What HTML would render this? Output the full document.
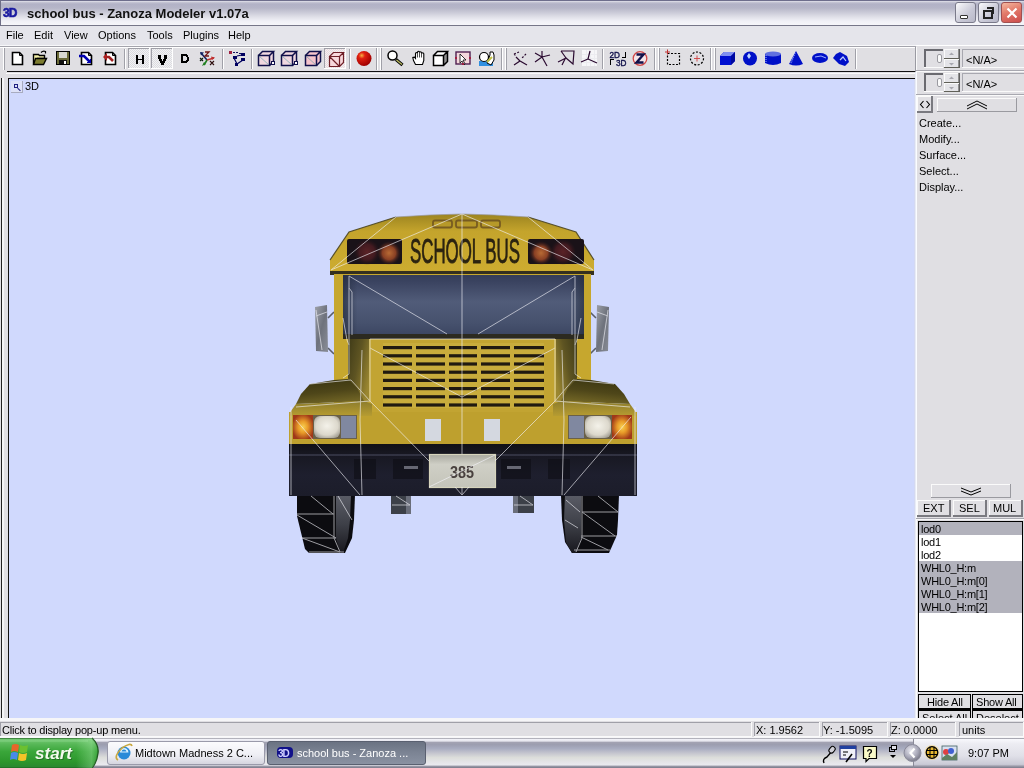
<!DOCTYPE html>
<html><head><meta charset="utf-8">
<style>
*{margin:0;padding:0;box-sizing:border-box}
html,body{width:1024px;height:768px;overflow:hidden;background:#e0dfe3;font-family:"Liberation Sans",sans-serif;font-size:11px;color:#000;position:relative}
.a{position:absolute}
.t{position:absolute;white-space:nowrap;line-height:1}
#title{left:0;top:0;width:1024px;height:26px;border-left:1px solid #6e6e86;background:linear-gradient(#6e6e8c 0px,#6e6e8c 1px,#e8e8f0 1px,#c8c8d6 2px,#b2b2c6 4px,#b6b6c8 8px,#c8c8d6 12px,#e0e0e8 17px,#f0f0f6 21px,#f6f6fa 25px,#767688 25px,#767688 26px)}
#ttext{left:27px;top:7px;font-weight:bold;font-size:13px;color:#111;letter-spacing:0}
.wbtn{position:absolute;top:2px;width:21px;height:21px;border-radius:3px;border:1px solid #7a7a8a;background:linear-gradient(135deg,#fafafc,#c8c8d6 60%,#b8b8c8)}
#menu{left:0;top:26px;width:1024px;height:19px;background:#e5e5eb}
.mi{top:30px;font-size:11px}
#tb{left:0;top:45px;width:1024px;height:27px;background:#e0dfe3;border-top:1px solid #fff}
#vp{left:9px;top:79px;width:906px;height:639px;background:#d0d9fd}
#rp{left:916px;top:46px;width:108px;height:672px;background:#e0dfe3}
#status{left:0;top:718px;width:1024px;height:20px;background:#e0dfe3;border-top:1px solid #fff}
#taskbar{left:0;top:738px;width:1024px;height:30px;background:linear-gradient(#a8a8b8 0px,#f4f4f8 1px,#d0d0dc 3px,#a8a9bc 7px,#b4b5c6 11px,#d4d5de 18px,#e6e6ec 24px,#dcdce4 28px,#9090a0 30px)}
.sp{position:absolute;border-top:1px solid #a0a0a8;border-left:1px solid #a0a0a8;border-right:1px solid #fff;border-bottom:1px solid #fff}
.btn{position:absolute;background:#e0dfe3;border-top:1px solid #fff;border-left:1px solid #fff;border-right:1px solid #808080;border-bottom:1px solid #808080;box-shadow:1px 1px 0 #404040}
</style></head><body>
<div id="root" style="position:absolute;left:0;top:0;width:1024px;height:768px;overflow:hidden;will-change:transform;background:#e0dfe3">
<!-- title bar -->
<div id="title" class="a"></div>
<svg class="a" style="left:3px;top:6px" width="20" height="13" viewBox="0 0 20 13"><text x="0" y="11" font-family="Liberation Sans" font-weight="bold" font-size="12" fill="#1a1aa0" stroke="#1a1aa0" stroke-width="0.6" letter-spacing="-1">3D</text></svg>
<div id="ttext" class="t">school bus - Zanoza Modeler v1.07a</div>
<div class="wbtn" style="left:955px"><div class="a" style="left:4px;top:12px;width:8px;height:4px;background:#fff;border:1px solid #333;border-radius:1px"></div></div>
<div class="wbtn" style="left:978px"><svg class="a" style="left:0;top:0" width="19" height="19" shape-rendering="crispEdges"><path d="M8 4h7v7h-2v-5h-5z" fill="#222"/><rect x="5" y="8" width="8" height="7" fill="none" stroke="#222" stroke-width="2"/><rect x="4" y="7" width="10" height="2" fill="#222"/></svg></div>
<div class="wbtn" style="left:1001px;border-color:#a05050;background:linear-gradient(160deg,#f4b8a0,#e27a6a 45%,#cc4c4c)"><svg class="a" style="left:3px;top:3px" width="14" height="14"><path d="M2.5 2.5L11.5 11.5M11.5 2.5L2.5 11.5" stroke="#fff" stroke-width="2.2"/></svg></div>
<!-- menu -->
<div id="menu" class="a"></div>
<div class="t mi" style="left:6px">File</div>
<div class="t mi" style="left:34px">Edit</div>
<div class="t mi" style="left:64px">View</div>
<div class="t mi" style="left:98px">Options</div>
<div class="t mi" style="left:147px">Tools</div>
<div class="t mi" style="left:183px">Plugins</div>
<div class="t mi" style="left:228px">Help</div>
<!-- toolbar -->
<div id="tb" class="a"></div>
<div class="a" style="left:0;top:71px;width:1024px;height:8px;background:#e0dfe3"></div>
<div class="a" style="left:7px;top:71px;width:908px;height:1px;background:#111"></div>
<div class="a" style="left:6px;top:73px;width:909px;height:1px;background:#fafafa"></div>
<div class="a" style="left:8px;top:78px;width:907px;height:1px;background:#111"></div>
<div class="a" style="left:1px;top:78px;width:1px;height:640px;background:#222"></div>
<div class="a" style="left:2px;top:78px;width:2px;height:640px;background:#f4f4f6"></div>
<div class="a" style="left:8px;top:78px;width:1px;height:640px;background:#111"></div>
<!-- viewport -->
<div id="vp" class="a"></div>
<div class="a" style="left:11px;top:81px;width:12px;height:12px;background:#dde2f8;border-right:1px solid #a8acc0;border-bottom:1px solid #a8acc0"></div>
<div class="a" style="left:14px;top:84px;width:4px;height:4px;border:1px solid #202080"></div>
<div class="a" style="left:17px;top:89px;width:4px;height:1px;background:#202080;transform:rotate(45deg)"></div>
<div class="t" style="left:25px;top:81px;font-size:11px">3D</div>
<!-- toolbar icons -->
<svg class="a" style="left:0;top:44px" width="916" height="30" viewBox="0 44 916 30" shape-rendering="crispEdges">
<rect x="0" y="45" width="916" height="1" fill="#f8f8fa"/>
<rect x="0" y="46" width="916" height="1" fill="#a4a4ac"/>
<rect x="0" y="47" width="916" height="1" fill="#ffffff"/>
<rect x="3" y="48" width="1" height="22" fill="#ffffff"/><rect x="4" y="48" width="1" height="22" fill="#a0a0a8"/>
<path d="M12.5 52.5H19.5L22.5 55.5V64.5H12.5Z" fill="#fff" stroke="#000" stroke-width="1.6" shape-rendering="auto"/>
<path d="M19.5 52.5V55.5H22.5" fill="none" stroke="#000" stroke-width="1" shape-rendering="auto"/>
<path d="M33.5 54.5H38.5L39.5 55.5H44.5V58.5H37.5L34.5 63.5H33.5Z" fill="#f4f0a8" stroke="#000" stroke-width="1.4" shape-rendering="auto"/>
<path d="M35.5 58.5H46.5L43.5 64.5H33.5Z" fill="#7c7c30" stroke="#000" stroke-width="1.4" shape-rendering="auto"/>
<path d="M41 52.5Q43 50.5 45.5 51.5V53.5" fill="none" stroke="#000" stroke-width="1.2" shape-rendering="auto"/>
<rect x="56" y="51" width="14" height="14" fill="#000"/>
<rect x="57" y="52" width="12" height="12" fill="#6a6a38"/>
<rect x="59" y="52" width="8" height="6" fill="#d8d8d0"/>
<rect x="59" y="60" width="8" height="4" fill="#111"/><rect x="64" y="61" width="2" height="3" fill="#fff"/>
<path d="M81.5 52.5H88.5L91.5 55.5V64.5H81.5Z" fill="#fff" stroke="#000" stroke-width="1.6" shape-rendering="auto"/>
<path d="M88.5 52.5V55.5H91.5" fill="none" stroke="#000" stroke-width="1" shape-rendering="auto"/>
<path d="M79 56H84L90 62" fill="none" stroke="#0000b0" stroke-width="2.6" shape-rendering="auto"/>
<path d="M86 63H91V58Z" fill="#0000b0"/>
<path d="M105.5 52.5H112.5L115.5 55.5V64.5H105.5Z" fill="#fff" stroke="#000" stroke-width="1.6" shape-rendering="auto"/>
<path d="M112.5 52.5V55.5H115.5" fill="none" stroke="#000" stroke-width="1" shape-rendering="auto"/>
<path d="M103 57L107 53V61Z" fill="#b02020" shape-rendering="auto"/>
<path d="M106 57H109L113 61" fill="none" stroke="#a02020" stroke-width="2.6" shape-rendering="auto"/>
<rect x="124" y="49" width="1" height="20" fill="#a0a0a8"/><rect x="125" y="49" width="1" height="20" fill="#ffffff"/>
<defs><pattern id="dith" width="2" height="2" patternUnits="userSpaceOnUse"><rect width="2" height="2" fill="#f2f2f4"/><rect width="1" height="1" fill="#dcdce0"/><rect x="1" y="1" width="1" height="1" fill="#dcdce0"/></pattern><pattern id="dithp" width="2" height="2" patternUnits="userSpaceOnUse"><rect width="2" height="2" fill="#f6eef0"/><rect width="1" height="1" fill="#e6dce0"/><rect x="1" y="1" width="1" height="1" fill="#e6dce0"/></pattern></defs>
<rect x="128" y="48" width="22" height="21" fill="url(#dith)"/>
<rect x="128" y="48" width="22" height="1" fill="#a0a0a8"/><rect x="128" y="48" width="1" height="21" fill="#a0a0a8"/>
<rect x="128" y="68" width="22" height="1" fill="#fff"/><rect x="149" y="48" width="1" height="21" fill="#fff"/>
<rect x="151" y="48" width="22" height="21" fill="url(#dith)"/>
<rect x="151" y="48" width="22" height="1" fill="#a0a0a8"/><rect x="151" y="48" width="1" height="21" fill="#a0a0a8"/>
<rect x="151" y="68" width="22" height="1" fill="#fff"/><rect x="172" y="48" width="1" height="21" fill="#fff"/>
<path d="M136 55h2v4h4v-4h2v9h-2v-4h-4v4h-2z" fill="#000"/>
<path d="M158 55h3v4h1v2h1v-2h1v-4h3v4h-1v2h-1v2h-1v2h-3v-2h-1v-2h-1v-2h-1z" fill="#000"/>
<path d="M181 54h5l1 1h1v2h1v4h-1v1h-1l-1 1h-5z M183 56v5h3v-1h1v-3h-1v-1z" fill="#000" fill-rule="evenodd"/>
<g shape-rendering="auto">
<path d="M207 60L201 53" stroke="#102060" stroke-width="1.6"/><path d="M200 52L204 52.5L201 55.5Z" fill="#102060"/>
<path d="M205 52h4l-4 4h4" fill="none" stroke="#701818" stroke-width="1.3"/>
<path d="M207 60L214 58" stroke="#c03030" stroke-width="1.4"/><path d="M215 57.5L211 56.5L212 60Z" fill="#c03030"/>
<path d="M207 60L204 65" stroke="#208020" stroke-width="1.6"/><path d="M202 66L204 62L206 64Z" fill="#208020"/>
<path d="M200 58L203 61M203 58L200 61" stroke="#102010" stroke-width="1.2"/>
<path d="M210 61L214 65M214 61L210 65" stroke="#301010" stroke-width="1.1"/>
</g>
<rect x="222" y="49" width="1" height="20" fill="#a0a0a8"/><rect x="223" y="49" width="1" height="20" fill="#ffffff"/>
<rect x="229" y="51" width="3" height="3" fill="#a02040"/>
<path d="M233 52h2v1h-2zM236 52h2v1h-2zM239 53h2v1h-2z" fill="#101060"/>
<rect x="241" y="53" width="4" height="3" fill="#000060"/>
<rect x="233" y="56" width="4" height="3" fill="#000060"/>
<rect x="241" y="58" width="4" height="3" fill="#000060"/>
<rect x="235" y="63" width="3" height="3" fill="#000060"/>
<path d="M237 56L242 55M234 58L237 64M237 64L243 60" stroke="#000060" stroke-width="1.2" shape-rendering="auto"/>
<rect x="251" y="49" width="1" height="20" fill="#a0a0a8"/><rect x="252" y="49" width="1" height="20" fill="#ffffff"/>
<g shape-rendering="auto">
<path d="M258.5 55.5L262.5 51.5H273.5V61.5L269.5 65.5H258.5Z" fill="#f0d8e0" stroke="none"/>
<path d="M258.5 55.5H269.5V65.5H258.5Z" fill="none" stroke="#10104a" stroke-width="1.5"/>
<path d="M258.5 55.5L262.5 51.5H273.5L269.5 55.5M273.5 51.5V61.5L269.5 65.5" fill="none" stroke="#10104a" stroke-width="1.5"/>
<path d="M259 56L269 65" stroke="#50a0a0" stroke-width="0.8" opacity="0.7"/>
</g>
<rect x="271" y="61" width="3" height="3" fill="#fff" stroke="#10104a" stroke-width="1"/>
<g shape-rendering="auto">
<path d="M281.5 55.5L285.5 51.5H296.5V61.5L292.5 65.5H281.5Z" fill="#f0d8e0" stroke="none"/>
<path d="M281.5 55.5H292.5V65.5H281.5Z" fill="none" stroke="#10104a" stroke-width="1.5"/>
<path d="M281.5 55.5L285.5 51.5H296.5L292.5 55.5M296.5 51.5V61.5L292.5 65.5" fill="none" stroke="#10104a" stroke-width="1.5"/>
<path d="M282 56L292 65" stroke="#50a0a0" stroke-width="0.8" opacity="0.7"/>
</g>
<rect x="294" y="61" width="3" height="3" fill="#fff" stroke="#10104a" stroke-width="1"/>
<g shape-rendering="auto">
<path d="M305.5 55.5L309.5 51.5H320.5V61.5L316.5 65.5H305.5Z" fill="#f4c4cc" stroke="none"/>
<path d="M305.5 55.5H316.5V65.5H305.5Z" fill="none" stroke="#10104a" stroke-width="1.5"/>
<path d="M305.5 55.5L309.5 51.5H320.5L316.5 55.5M320.5 51.5V61.5L316.5 65.5" fill="none" stroke="#10104a" stroke-width="1.5"/>
<path d="M306 56L316 65" stroke="#50a0a0" stroke-width="0.8" opacity="0.7"/>
</g>
<rect x="324" y="48" width="22" height="21" fill="url(#dithp)"/>
<rect x="324" y="48" width="22" height="1" fill="#a0a0a8"/><rect x="324" y="48" width="1" height="21" fill="#a0a0a8"/><rect x="324" y="68" width="22" height="1" fill="#fff"/><rect x="345" y="48" width="1" height="21" fill="#fff"/>
<g shape-rendering="auto"><path d="M329.5 56.5L333.5 52.5H343.5V62.5L339.5 66.5H329.5Z" fill="#f8d8dc"/>
<path d="M329.5 56.5H339.5V66.5H329.5ZM329.5 56.5L333.5 52.5H343.5L339.5 56.5M343.5 52.5V62.5L339.5 66.5M329.5 56.5L339.5 66.5" fill="none" stroke="#702028" stroke-width="1.2"/></g>
<rect x="349" y="49" width="1" height="20" fill="#a0a0a8"/><rect x="350" y="49" width="1" height="20" fill="#ffffff"/>
<g shape-rendering="auto"><defs><radialGradient id="rsph" cx="0.35" cy="0.3" r="0.7"><stop offset="0" stop-color="#f8b040"/><stop offset="0.3" stop-color="#e02010"/><stop offset="1" stop-color="#a00000"/></radialGradient></defs><circle cx="364" cy="58.5" r="7.5" fill="url(#rsph)"/></g>
<rect x="376" y="48" width="1" height="22" fill="#a0a0a8"/><rect x="377" y="48" width="1" height="22" fill="#ffffff"/>
<rect x="380" y="48" width="1" height="22" fill="#ffffff"/><rect x="381" y="48" width="1" height="22" fill="#a0a0a8"/>
<g shape-rendering="auto"><circle cx="392.5" cy="55.5" r="4.5" fill="#fff" stroke="#000" stroke-width="1.5"/><path d="M396 59.5L402.5 65" stroke="#000" stroke-width="3.2"/><path d="M396.5 60L402 64.5" stroke="#b8b860" stroke-width="1.5"/></g>
<g shape-rendering="auto"><path d="M415.5 64.5L413.5 60.5L412.8 57.5L414.5 57.2L415.5 58.5V53.5Q415.5 52.5 416.5 52.5Q417.5 52.5 417.5 53.5V52.3Q417.5 51.3 418.5 51.3Q419.5 51.3 419.5 52.3V52.8Q419.5 51.8 420.5 51.8Q421.5 51.8 421.5 52.8V53.8Q421.5 52.8 422.5 52.8Q423.8 52.8 423.8 53.8V60.5L422.5 64.5Z" fill="#fff" stroke="#000" stroke-width="1.1"/><path d="M417.5 53.5V57.5M419.5 52.8V57.5M421.5 53.8V57.5" stroke="#000" stroke-width="0.7"/></g>
<g shape-rendering="auto"><path d="M433.5 55.5L437.5 51.5H447.5V61.5L443.5 65.5H433.5Z" fill="#fff"/><path d="M443.5 55.5L447.5 51.5V61.5L443.5 65.5Z" fill="#909090"/><path d="M433.5 55.5H443.5V65.5H433.5ZM433.5 55.5L437.5 51.5H447.5L443.5 55.5M447.5 51.5V61.5L443.5 65.5" fill="none" stroke="#000" stroke-width="1.5"/></g>
<rect x="456" y="52" width="14" height="12" fill="#f4d8dc" stroke="#502050" stroke-width="1.4" shape-rendering="auto"/>
<path d="M460 54V63L462 61L464 65L465 64L463 60H466Z" fill="#fff" stroke="#000" stroke-width="0.8" shape-rendering="auto"/>
<rect x="455" y="57" width="2" height="2" fill="#a02040"/><rect x="469" y="57" width="2" height="2" fill="#a02040"/><rect x="462" y="63" width="2" height="2" fill="#a02040"/>
<g shape-rendering="auto"><rect x="479" y="61" width="14" height="5" fill="#3090e0"/><circle cx="484" cy="57" r="4.5" fill="#fff" stroke="#000" stroke-width="1.2"/><path d="M487 63L490 55V52H493L494 55V60L491 65Z" fill="#fff" stroke="#000" stroke-width="1"/><path d="M487 62L492 57" stroke="#c0c040" stroke-width="2"/></g>
<rect x="501" y="48" width="1" height="22" fill="#a0a0a8"/><rect x="502" y="48" width="1" height="22" fill="#ffffff"/>
<rect x="505" y="48" width="1" height="22" fill="#ffffff"/><rect x="506" y="48" width="1" height="22" fill="#a0a0a8"/>
<g shape-rendering="auto" fill="none" stroke="#2a0a30" stroke-width="1.2">
<path d="M514 65L520 61L527 65M520 61L516 57"/>
<path d="M514 54L519 52M514 54L516 56M526 54L522 58" stroke-dasharray="2 1.5"/>
<path d="M542 57L535 53M542 57L550 55M542 57L542 51M542 57L535 62M542 57L547 66"/>
<path d="M561 51L574 51L573 64L566 58M561 51L566 58M558 62L566 58M562 65L566 57"/>
</g>
<rect x="582" y="50" width="15" height="16" fill="#f6f6f8"/>
<path d="M582 54h15M582 58h15M582 62h15M586 50v16M590 50v16M594 50v16" stroke="#ececf0" stroke-width="1"/>
<path d="M588 59L590 51M588 59L581 62M588 59L597 63" fill="none" stroke="#2a0a30" stroke-width="1.2" shape-rendering="auto"/>
<rect x="602" y="49" width="1" height="20" fill="#a0a0a8"/><rect x="603" y="49" width="1" height="20" fill="#ffffff"/>
<g shape-rendering="auto" font-family="Liberation Sans" font-size="8.5" fill="#10104a" stroke="#10104a" stroke-width="0.35">
<text x="609.5" y="57.8" textLength="10.5" lengthAdjust="spacingAndGlyphs">2D</text>
<text x="616" y="65.8" textLength="10.5" lengthAdjust="spacingAndGlyphs">3D</text>
</g>
<path d="M622 57h3v-5h1v6h-4z M610 59h4v1h-3v5h-1z" fill="#000"/>
<g shape-rendering="auto"><circle cx="640" cy="58.5" r="6.8" fill="#f4e4e8" stroke="#d04848" stroke-width="1.3"/><path d="M636.5 54.5H643.5L636.5 62.5H643.5" fill="none" stroke="#10104a" stroke-width="2.4"/></g>
<rect x="654" y="48" width="1" height="22" fill="#a0a0a8"/><rect x="655" y="48" width="1" height="22" fill="#ffffff"/>
<rect x="658" y="48" width="1" height="22" fill="#ffffff"/><rect x="659" y="48" width="1" height="22" fill="#a0a0a8"/>
<g shape-rendering="auto"><rect x="667.5" y="53.5" width="12" height="11" fill="none" stroke="#000" stroke-width="1.2" stroke-dasharray="2 1.5"/><path d="M665 52H670M667.5 49.5V54.5" stroke="#c03030" stroke-width="1"/></g>
<g shape-rendering="auto"><circle cx="697" cy="58.5" r="6.5" fill="none" stroke="#000" stroke-width="1.2" stroke-dasharray="2 1.6"/><path d="M694 58.5H700M697 55.5V61.5" stroke="#d04040" stroke-width="0.9"/></g>
<rect x="710" y="48" width="1" height="22" fill="#a0a0a8"/><rect x="711" y="48" width="1" height="22" fill="#ffffff"/>
<rect x="714" y="48" width="1" height="22" fill="#ffffff"/><rect x="715" y="48" width="1" height="22" fill="#a0a0a8"/>
<g shape-rendering="auto">
<path d="M720 56L724 52H735V61L731 65H720Z" fill="#0010d0"/><path d="M720 56L724 52H735L731 56Z" fill="#8090f0"/><path d="M731 56L735 52V61L731 65Z" fill="#0008a0"/>
<circle cx="750" cy="58.5" r="7" fill="#0010c8"/><path d="M747 56L749 53L751 56L749 59Z" fill="#c0d8ff"/>
<path d="M765 54V63Q773 67 781 63V54Z" fill="#0010c8"/><ellipse cx="773" cy="54" rx="8" ry="2.5" fill="#6070e0"/><path d="M766 55V62" stroke="#a0b0ff" stroke-width="1" stroke-dasharray="1 1"/>
<path d="M796 51L789 64Q796 67 803 64Z" fill="#0010c8"/><path d="M795 53L791 63" stroke="#a0b0ff" stroke-width="1.2" stroke-dasharray="1 1"/>
<ellipse cx="820" cy="58" rx="8" ry="5" fill="#0010c8"/><path d="M815 57L821 56L826 58" stroke="#a0b0ff" stroke-width="1" fill="none"/>
<path d="M836 54L840 52L847 56L849 62L845 66L839 64L833 58Z" fill="#0010c8"/><path d="M840 60L843 57L846 61" stroke="#c0d0ff" stroke-width="1.2" fill="none"/>
</g>
<rect x="855" y="49" width="1" height="20" fill="#a0a0a8"/><rect x="856" y="49" width="1" height="20" fill="#ffffff"/>
</svg>
<!-- bus -->
<svg class="a" style="left:0;top:0" width="1024" height="768" viewBox="0 0 1024 768">
<defs>
<linearGradient id="capg" x1="0" y1="0" x2="0" y2="1"><stop offset="0" stop-color="#9c8420"/><stop offset="0.3" stop-color="#c4a42c"/><stop offset="1" stop-color="#cdac30"/></linearGradient>
<linearGradient id="wsg" x1="0" y1="0" x2="0" y2="1"><stop offset="0" stop-color="#333c58"/><stop offset="0.15" stop-color="#3d4663"/><stop offset="0.45" stop-color="#515c79"/><stop offset="0.8" stop-color="#46516d"/><stop offset="1" stop-color="#3c4662"/></linearGradient>
<linearGradient id="fendL" x1="0" y1="0" x2="0.3" y2="1"><stop offset="0" stop-color="#36320f"/><stop offset="0.6" stop-color="#4e4619"/><stop offset="1" stop-color="#6e6224"/></linearGradient>
<linearGradient id="ffg" x1="0" y1="0" x2="0" y2="1"><stop offset="0" stop-color="#8c7c2c"/><stop offset="1" stop-color="#bca032"/></linearGradient>
<linearGradient id="fendR" x1="1" y1="0" x2="0.7" y2="1"><stop offset="0" stop-color="#36320f"/><stop offset="0.6" stop-color="#4e4619"/><stop offset="1" stop-color="#6e6224"/></linearGradient>
<linearGradient id="hsL" x1="0" y1="0" x2="1" y2="0.6"><stop offset="0" stop-color="#3e3a18"/><stop offset="0.5" stop-color="#5e5422"/><stop offset="1" stop-color="#9a8630"/></linearGradient>
<linearGradient id="hsR" x1="1" y1="0" x2="0" y2="0.6"><stop offset="0" stop-color="#3e3a18"/><stop offset="0.5" stop-color="#5e5422"/><stop offset="1" stop-color="#9a8630"/></linearGradient>
<linearGradient id="bmpg" x1="0" y1="0" x2="0" y2="1"><stop offset="0" stop-color="#101016"/><stop offset="0.2" stop-color="#181822"/><stop offset="0.6" stop-color="#1e1f2e"/><stop offset="1" stop-color="#1c1d2a"/></linearGradient>
<radialGradient id="tlL" cx="0.72" cy="0.55" r="0.32"><stop offset="0" stop-color="#b05a28"/><stop offset="0.7" stop-color="#7a3420"/><stop offset="1" stop-color="#2a1418" stop-opacity="0"/></radialGradient>
<radialGradient id="tlR" cx="0.28" cy="0.55" r="0.32"><stop offset="0" stop-color="#b05a28"/><stop offset="0.7" stop-color="#7a3420"/><stop offset="1" stop-color="#2a1418" stop-opacity="0"/></radialGradient>
<linearGradient id="whg" x1="0" y1="0" x2="0" y2="1"><stop offset="0" stop-color="#5a5c66"/><stop offset="0.5" stop-color="#3e4048"/><stop offset="1" stop-color="#18181e"/></linearGradient>
<linearGradient id="mirg" x1="0" y1="0" x2="1" y2="1"><stop offset="0" stop-color="#9ea2aa"/><stop offset="0.5" stop-color="#6e727c"/><stop offset="1" stop-color="#8a8e98"/></linearGradient>
<linearGradient id="plg" x1="0" y1="0" x2="0" y2="1"><stop offset="0" stop-color="#a8a89e"/><stop offset="0.3" stop-color="#cfcfc6"/><stop offset="1" stop-color="#c4c4ba"/></linearGradient>
<radialGradient id="blobO" cx="0.5" cy="0.5" r="0.5"><stop offset="0" stop-color="#b86a34"/><stop offset="0.55" stop-color="#8a4024"/><stop offset="1" stop-color="#3a1a1a" stop-opacity="0"/></radialGradient>
<radialGradient id="blobM" cx="0.5" cy="0.5" r="0.5"><stop offset="0" stop-color="#5a2226"/><stop offset="0.6" stop-color="#421a20"/><stop offset="1" stop-color="#2a1418" stop-opacity="0"/></radialGradient>
<radialGradient id="amb" cx="0.5" cy="0.5" r="0.55"><stop offset="0" stop-color="#f8d050"/><stop offset="0.45" stop-color="#e89a28"/><stop offset="1" stop-color="#a03818"/></radialGradient>
<radialGradient id="wht" cx="0.5" cy="0.45" r="0.6"><stop offset="0" stop-color="#f4f2ea"/><stop offset="0.7" stop-color="#dcd8cc"/><stop offset="1" stop-color="#a8a49a"/></radialGradient>
<linearGradient id="wsside" x1="0" y1="0" x2="1" y2="0"><stop offset="0" stop-color="#202838" stop-opacity="0.6"/><stop offset="0.06" stop-color="#202838" stop-opacity="0"/><stop offset="0.94" stop-color="#202838" stop-opacity="0"/><stop offset="1" stop-color="#202838" stop-opacity="0.6"/></linearGradient>
</defs>
<path d="M328 318L334 312M328 348L334 354" stroke="#5a5e68" stroke-width="1.6"/>
<path d="M596 318L590 312M596 348L590 354" stroke="#5a5e68" stroke-width="1.6"/>
<path d="M315 307L327 305L328 352L316 351Z" fill="url(#mirg)"/>
<path d="M597 305L609 307L608 351L596 352Z" fill="url(#mirg)"/>
<polygon points="297,495 355,495 354,520 352,538 345,553 309,553 305,549 297,516" fill="#0c0c10"/>
<polygon points="561,495 619,495 618,520 617,535 609,553 572,553 565,542 562,520" fill="#0c0c10"/>
<polygon points="336,495 351,495 350,520 348,538 343,553 340,552 336,538" fill="url(#whg)"/>
<polygon points="565,495 581,495 581,538 576,553 572,553 566,542 564,520" fill="url(#whg)"/>
<rect x="391" y="495" width="20" height="19" fill="#3c4048"/><rect x="406" y="495" width="5" height="19" fill="#6a6e7a"/>
<rect x="513" y="495" width="21" height="18" fill="#3c4048"/><rect x="513" y="495" width="5" height="18" fill="#6a6e7a"/>
<polygon points="349,232 396,217 430,215 462,214 494,215 528,217 576,232 594,260 594,272 330,272 330,260" fill="url(#capg)"/>
<path d="M330 260L349 232L396 217M528 217L576 232L594 260" fill="none" stroke="#4a4420" stroke-width="1.2" opacity="0.9"/><path d="M396 217L430 215L462 214L494 215L528 217" fill="none" stroke="#9a9aa0" stroke-width="1" opacity="0.7"/>
<g fill="#b89a2a" stroke="#6e5220" stroke-width="1.8" opacity="0.85"><rect x="433" y="220.5" width="19" height="7" rx="2"/><rect x="456" y="220.5" width="21" height="7" rx="2"/><rect x="481" y="220.5" width="19" height="7" rx="2"/></g>
<rect x="330" y="271" width="264" height="4" fill="#34301e"/>
<rect x="347" y="239" width="55" height="25" rx="2" fill="#1a1218"/>
<circle cx="367" cy="252" r="13" fill="url(#blobM)"/><circle cx="389" cy="253" r="12" fill="url(#blobO)"/>
<rect x="528" y="239" width="56" height="25" rx="2" fill="#1a1218"/>
<circle cx="563" cy="252" r="13" fill="url(#blobM)"/><circle cx="541" cy="253" r="12" fill="url(#blobO)"/>
<text x="410" y="263" font-family="Liberation Sans" font-size="34.5" fill="#2a2210" stroke="#2a2210" stroke-width="0.8" textLength="110" lengthAdjust="spacingAndGlyphs">SCHOOL BUS</text>
<rect x="334" y="274" width="257" height="144" fill="#c6a72e"/>
<rect x="343" y="275" width="241" height="60" fill="url(#wsg)"/>
<rect x="343" y="334" width="241" height="5" fill="#2c2a20"/>
<rect x="343" y="275" width="241" height="60" fill="url(#wsside)"/>
<polygon points="348,339 370,339 370,402 356,402 350,386 348,378" fill="url(#hsL)"/>
<polygon points="577,339 555,339 555,402 569,402 575,386 577,378" fill="url(#hsR)"/>
<rect x="369" y="339" width="187" height="75" fill="#c2a432"/>
<rect x="383" y="343" width="161" height="65" fill="#c8ac3c"/>
<rect x="383" y="346.0" width="29" height="3.2" fill="#201a10"/>
<rect x="416" y="346.0" width="29" height="3.2" fill="#201a10"/>
<rect x="449" y="346.0" width="28" height="3.2" fill="#201a10"/>
<rect x="481" y="346.0" width="29" height="3.2" fill="#201a10"/>
<rect x="514" y="346.0" width="30" height="3.2" fill="#201a10"/>
<rect x="383" y="354.2" width="29" height="3.2" fill="#201a10"/>
<rect x="416" y="354.2" width="29" height="3.2" fill="#201a10"/>
<rect x="449" y="354.2" width="28" height="3.2" fill="#201a10"/>
<rect x="481" y="354.2" width="29" height="3.2" fill="#201a10"/>
<rect x="514" y="354.2" width="30" height="3.2" fill="#201a10"/>
<rect x="383" y="362.4" width="29" height="3.2" fill="#201a10"/>
<rect x="416" y="362.4" width="29" height="3.2" fill="#201a10"/>
<rect x="449" y="362.4" width="28" height="3.2" fill="#201a10"/>
<rect x="481" y="362.4" width="29" height="3.2" fill="#201a10"/>
<rect x="514" y="362.4" width="30" height="3.2" fill="#201a10"/>
<rect x="383" y="370.6" width="29" height="3.2" fill="#201a10"/>
<rect x="416" y="370.6" width="29" height="3.2" fill="#201a10"/>
<rect x="449" y="370.6" width="28" height="3.2" fill="#201a10"/>
<rect x="481" y="370.6" width="29" height="3.2" fill="#201a10"/>
<rect x="514" y="370.6" width="30" height="3.2" fill="#201a10"/>
<rect x="383" y="378.8" width="29" height="3.2" fill="#201a10"/>
<rect x="416" y="378.8" width="29" height="3.2" fill="#201a10"/>
<rect x="449" y="378.8" width="28" height="3.2" fill="#201a10"/>
<rect x="481" y="378.8" width="29" height="3.2" fill="#201a10"/>
<rect x="514" y="378.8" width="30" height="3.2" fill="#201a10"/>
<rect x="383" y="387.0" width="29" height="3.2" fill="#201a10"/>
<rect x="416" y="387.0" width="29" height="3.2" fill="#201a10"/>
<rect x="449" y="387.0" width="28" height="3.2" fill="#201a10"/>
<rect x="481" y="387.0" width="29" height="3.2" fill="#201a10"/>
<rect x="514" y="387.0" width="30" height="3.2" fill="#201a10"/>
<rect x="383" y="395.2" width="29" height="3.2" fill="#201a10"/>
<rect x="416" y="395.2" width="29" height="3.2" fill="#201a10"/>
<rect x="449" y="395.2" width="28" height="3.2" fill="#201a10"/>
<rect x="481" y="395.2" width="29" height="3.2" fill="#201a10"/>
<rect x="514" y="395.2" width="30" height="3.2" fill="#201a10"/>
<rect x="383" y="403.4" width="29" height="3.2" fill="#201a10"/>
<rect x="416" y="403.4" width="29" height="3.2" fill="#201a10"/>
<rect x="449" y="403.4" width="28" height="3.2" fill="#201a10"/>
<rect x="481" y="403.4" width="29" height="3.2" fill="#201a10"/>
<rect x="514" y="403.4" width="30" height="3.2" fill="#201a10"/>
<rect x="289" y="412" width="348" height="34" fill="#bea02e"/>
<polygon points="296,404 301,394 310,384 334,380 348,379 357,388 364,401" fill="url(#fendL)"/>
<polygon points="630,404 624,394 615,384 591,380 577,379 568,388 561,401" fill="url(#fendR)"/>
<polygon points="289,418 291,411 296,404 364,401 372,404 372,418" fill="url(#ffg)"/>
<polygon points="637,418 635,411 630,404 561,401 553,404 553,418" fill="url(#ffg)"/>
<path d="M289 416L637 416L637 446L289 446Z" fill="#bea02e"/>
<rect x="293" y="415" width="64" height="24" fill="#6a6048"/>
<rect x="293" y="415" width="20" height="24" fill="url(#amb)"/>
<rect x="314" y="416" width="26" height="22" rx="6" fill="url(#wht)"/>
<rect x="341" y="416" width="15" height="22" fill="#8088a0"/>
<rect x="568" y="415" width="64" height="24" fill="#6a6048"/>
<rect x="612" y="415" width="20" height="24" fill="url(#amb)"/>
<rect x="585" y="416" width="26" height="22" rx="6" fill="url(#wht)"/>
<rect x="569" y="416" width="15" height="22" fill="#8088a0"/>
<rect x="425" y="419" width="16" height="22" fill="#d4d8e0"/>
<rect x="484" y="419" width="16" height="22" fill="#d4d8e0"/>
<rect x="289" y="444" width="348" height="52" fill="url(#bmpg)"/>
<rect x="289" y="454" width="348" height="2" fill="#383a4a" opacity="0.8"/>
<rect x="354" y="459" width="22" height="20" fill="#0e0e14" opacity="0.6"/>
<rect x="393" y="459" width="30" height="20" fill="#0e0e14" opacity="0.6"/>
<rect x="501" y="459" width="30" height="20" fill="#0e0e14" opacity="0.6"/>
<rect x="548" y="459" width="22" height="20" fill="#0e0e14" opacity="0.6"/>
<rect x="404" y="466" width="14" height="3" fill="#8a8c98" opacity="0.7"/><rect x="507" y="466" width="14" height="3" fill="#8a8c98" opacity="0.7"/>
<rect x="429.5" y="454.5" width="66" height="33" fill="url(#plg)" stroke="#d6d4bc" stroke-width="1.2"/>
<text x="450" y="478" font-family="Liberation Sans" font-weight="bold" font-size="16" fill="#48403e" textLength="24" lengthAdjust="spacingAndGlyphs">385</text>
<g fill="none" stroke="#f4f4fa" stroke-width="1" opacity="0.62">
<path d="M462 214L462 454"/>
<path d="M462 487L462 495"/>
<path d="M396 217L331 270"/>
<path d="M462 214L331 270"/>
<path d="M528 217L593 270"/>
<path d="M462 214L593 270"/>
<path d="M349 276L447 334"/>
<path d="M575 276L478 334"/>
<path d="M349 276L349 374L343 378"/>
<path d="M575 276L575 374L581 378"/>
<path d="M349 288L352 292L352 335"/>
<path d="M575 288L572 292L572 335"/>
<path d="M343 318L347 340L349 345"/>
<path d="M581 318L577 340L575 345"/>
<path d="M316 310L322 350"/>
<path d="M608 310L602 350"/>
<path d="M316 316L327 312"/>
<path d="M608 316L597 312"/>
<path d="M370 339L555 339"/>
<path d="M370 348L462 397L555 348"/>
<path d="M370 339L370 401"/>
<path d="M555 339L555 401"/>
<path d="M370 401L429 461"/>
<path d="M555 401L495 461"/>
<path d="M362 350L360 420L362 495"/>
<path d="M562 350L564 420L562 495"/>
<path d="M296 407L370 401"/>
<path d="M630 407L555 401"/>
<path d="M296 420L360 495"/>
<path d="M631 417L564 495"/>
<path d="M291 407L291 495"/>
<path d="M635 407L635 495"/>
<path d="M310 384L351 380L370 401"/>
<path d="M614 384L573 380L555 401"/>
<path d="M429 487L495 455"/>
<path d="M455 487L462 495L469 487"/>
<path d="M297 514L334 514"/>
<path d="M300 538L336 538"/>
<path d="M309 552L344 552"/>
<path d="M311 496L333 514"/>
<path d="M297 515L336 538"/>
<path d="M302 538L340 552"/>
<path d="M334 496L334 538L340 552"/>
<path d="M338 496L352 520"/>
<path d="M618 512L582 512"/>
<path d="M617 536L581 536"/>
<path d="M610 550L574 550"/>
<path d="M598 496L618 512"/>
<path d="M582 512L615 536"/>
<path d="M581 537L608 550"/>
<path d="M582 496L582 538L576 552"/>
<path d="M566 500L580 512"/>
<path d="M565 520L578 528"/>
<path d="M392 505L410 505"/>
<path d="M396 496L410 505"/>
<path d="M514 505L533 505"/>
<path d="M520 496L533 505"/>
</g>
</svg>
<!-- right panel -->
<div id="rp" class="a"></div>
<svg class="a" style="left:0;top:0" width="1024" height="768" viewBox="0 0 1024 768" shape-rendering="crispEdges">
<rect x="915" y="47" width="1" height="25" fill="#9a9aa2"/><rect x="916" y="47" width="1" height="25" fill="#fafafa"/>
<rect x="914" y="79" width="1" height="639" fill="#d4d9f2"/><rect x="915" y="72" width="1" height="646" fill="#e8ecf6"/><rect x="916" y="72" width="1" height="646" fill="#fafcff"/>
<rect x="924" y="49" width="19" height="19" fill="#e0dfe3"/>
<rect x="924" y="49" width="19" height="2" fill="#6a6a70"/><rect x="924" y="49" width="2" height="19" fill="#6a6a70"/>
<rect x="924" y="67" width="19" height="1" fill="#fafafa"/>
<rect x="937.5" y="54.5" width="4" height="8" rx="1.5" fill="#fafafa" stroke="#9a9aa0" stroke-width="1" shape-rendering="auto"/>
<rect x="944" y="49" width="16" height="19" fill="#e4e4e8"/>
<rect x="944" y="49" width="16" height="1" fill="#fafafa"/><rect x="944" y="49" width="1" height="19" fill="#fafafa"/>
<rect x="958" y="49" width="1" height="19" fill="#909090"/><rect x="959" y="49" width="1" height="19" fill="#606060"/>
<rect x="944" y="58" width="15" height="1" fill="#606058"/><rect x="944" y="59" width="15" height="1" fill="#fafafa"/>
<rect x="944" y="67" width="16" height="1" fill="#606058"/>
<path d="M949 55h5l-2.5 -2.5z" fill="#a8a8b0" shape-rendering="auto"/>
<path d="M949 63h5l-2.5 2.5z" fill="#a8a8b0" shape-rendering="auto"/>
<rect x="962" y="49" width="62" height="19" fill="#e0dfe3"/>
<rect x="962" y="49" width="62" height="1" fill="#a8a8b0"/><rect x="962" y="49" width="1" height="19" fill="#a8a8b0"/>
<rect x="962" y="67" width="62" height="1" fill="#fafafa"/>
<rect x="924" y="73" width="19" height="19" fill="#e0dfe3"/>
<rect x="924" y="73" width="19" height="2" fill="#6a6a70"/><rect x="924" y="73" width="2" height="19" fill="#6a6a70"/>
<rect x="924" y="91" width="19" height="1" fill="#fafafa"/>
<rect x="937.5" y="78.5" width="4" height="8" rx="1.5" fill="#fafafa" stroke="#9a9aa0" stroke-width="1" shape-rendering="auto"/>
<rect x="944" y="73" width="16" height="19" fill="#e4e4e8"/>
<rect x="944" y="73" width="16" height="1" fill="#fafafa"/><rect x="944" y="73" width="1" height="19" fill="#fafafa"/>
<rect x="958" y="73" width="1" height="19" fill="#909090"/><rect x="959" y="73" width="1" height="19" fill="#606060"/>
<rect x="944" y="82" width="15" height="1" fill="#606058"/><rect x="944" y="83" width="15" height="1" fill="#fafafa"/>
<rect x="944" y="91" width="16" height="1" fill="#606058"/>
<path d="M949 79h5l-2.5 -2.5z" fill="#a8a8b0" shape-rendering="auto"/>
<path d="M949 87h5l-2.5 2.5z" fill="#a8a8b0" shape-rendering="auto"/>
<rect x="962" y="73" width="62" height="19" fill="#e0dfe3"/>
<rect x="962" y="73" width="62" height="1" fill="#a8a8b0"/><rect x="962" y="73" width="1" height="19" fill="#a8a8b0"/>
<rect x="962" y="91" width="62" height="1" fill="#fafafa"/>
<rect x="916" y="70" width="108" height="1" fill="#a8a8b0"/><rect x="916" y="71" width="108" height="1" fill="#fafafa"/>
<rect x="916" y="94" width="108" height="1" fill="#a8a8b0"/><rect x="916" y="95" width="108" height="1" fill="#fafafa"/>
<rect x="917" y="96" width="16" height="17" fill="#e0dfe3"/>
<rect x="917" y="96" width="16" height="1" fill="#fafafa"/><rect x="917" y="96" width="1" height="17" fill="#fafafa"/>
<rect x="931" y="96" width="2" height="17" fill="#7a7a80"/><rect x="917" y="111" width="16" height="2" fill="#7a7a80"/>
<path d="M923.5 101L920.5 104.5L923.5 108M926.5 101L929.5 104.5L926.5 108" fill="none" stroke="#000" stroke-width="1.1" shape-rendering="auto"/>
<rect x="937" y="98" width="80" height="14" fill="#e0dfe3"/>
<rect x="937" y="98" width="80" height="1" fill="#fafafa"/><rect x="937" y="98" width="1" height="14" fill="#fafafa"/>
<rect x="1016" y="98" width="1" height="14" fill="#9a9aa0"/><rect x="937" y="111" width="80" height="1" fill="#9a9aa0"/>
<path d="M967 106L977 101L987 106M967 109L977 104L987 109" fill="none" stroke="#000" stroke-width="1" shape-rendering="auto"/>
<rect x="931" y="484" width="80" height="14" fill="#e0dfe3"/>
<rect x="931" y="484" width="80" height="1" fill="#fafafa"/><rect x="931" y="484" width="1" height="14" fill="#fafafa"/>
<rect x="1010" y="484" width="1" height="14" fill="#9a9aa0"/><rect x="931" y="497" width="80" height="1" fill="#9a9aa0"/>
<path d="M961 488L971 492L981 488M961 491L971 495L981 491" fill="none" stroke="#000" stroke-width="1" shape-rendering="auto"/>
<rect x="917" y="500" width="34" height="17" fill="#e0dfe3"/>
<rect x="917" y="500" width="34" height="1" fill="#fafafa"/><rect x="917" y="500" width="1" height="17" fill="#fafafa"/>
<rect x="949" y="500" width="2" height="17" fill="#7a7a80"/><rect x="917" y="515" width="34" height="2" fill="#7a7a80"/>
<rect x="953" y="500" width="34" height="17" fill="#e0dfe3"/>
<rect x="953" y="500" width="34" height="1" fill="#fafafa"/><rect x="953" y="500" width="1" height="17" fill="#fafafa"/>
<rect x="985" y="500" width="2" height="17" fill="#7a7a80"/><rect x="953" y="515" width="34" height="2" fill="#7a7a80"/>
<rect x="989" y="500" width="34" height="17" fill="#e0dfe3"/>
<rect x="989" y="500" width="34" height="1" fill="#fafafa"/><rect x="989" y="500" width="1" height="17" fill="#fafafa"/>
<rect x="1021" y="500" width="2" height="17" fill="#7a7a80"/><rect x="989" y="515" width="34" height="2" fill="#7a7a80"/>
<rect x="916" y="518" width="108" height="1" fill="#a8a8b0"/><rect x="916" y="519" width="108" height="1" fill="#fafafa"/>
<rect x="918" y="521" width="105" height="171" fill="#fff"/>
<rect x="918" y="521" width="105" height="1" fill="#000"/><rect x="918" y="521" width="1" height="171" fill="#000"/>
<rect x="1022" y="521" width="1" height="171" fill="#000"/><rect x="918" y="691" width="105" height="1" fill="#000"/>
<rect x="919" y="522" width="103" height="13" fill="#b2b2bc"/>
<rect x="919" y="561" width="103" height="52" fill="#b2b2bc"/>
<rect x="918" y="694" width="53" height="16" fill="#e0dfe3"/>
<rect x="918" y="694" width="53" height="1" fill="#000"/><rect x="918" y="694" width="1" height="16" fill="#000"/><rect x="970" y="694" width="1" height="16" fill="#000"/>
<rect x="918" y="708" width="53" height="2" fill="#000"/>
<rect x="918" y="710" width="53" height="16" fill="#e0dfe3"/>
<rect x="918" y="710" width="53" height="1" fill="#000"/><rect x="918" y="710" width="1" height="16" fill="#000"/><rect x="970" y="710" width="1" height="16" fill="#000"/>
<rect x="918" y="724" width="53" height="2" fill="#000"/>
<rect x="972" y="694" width="51" height="16" fill="#e0dfe3"/>
<rect x="972" y="694" width="51" height="1" fill="#000"/><rect x="972" y="694" width="1" height="16" fill="#000"/><rect x="1022" y="694" width="1" height="16" fill="#000"/>
<rect x="972" y="708" width="51" height="2" fill="#000"/>
<rect x="972" y="710" width="51" height="16" fill="#e0dfe3"/>
<rect x="972" y="710" width="51" height="1" fill="#000"/><rect x="972" y="710" width="1" height="16" fill="#000"/><rect x="1022" y="710" width="1" height="16" fill="#000"/>
<rect x="972" y="724" width="51" height="2" fill="#000"/>
</svg>
<div class="t" style="left:966px;top:55px;">&lt;N/A&gt;</div>
<div class="t" style="left:966px;top:79px;">&lt;N/A&gt;</div>
<div class="t" style="left:919px;top:118px;">Create...</div>
<div class="t" style="left:919px;top:134px;">Modify...</div>
<div class="t" style="left:919px;top:150px;">Surface...</div>
<div class="t" style="left:919px;top:166px;">Select...</div>
<div class="t" style="left:919px;top:182px;">Display...</div>
<div class="t" style="left:923px;top:503px;">EXT</div>
<div class="t" style="left:959px;top:503px;">SEL</div>
<div class="t" style="left:993px;top:503px;">MUL</div>
<div class="t" style="left:921px;top:524px;letter-spacing:-0.25px">lod0</div>
<div class="t" style="left:921px;top:537px;letter-spacing:-0.25px">lod1</div>
<div class="t" style="left:921px;top:550px;letter-spacing:-0.25px">lod2</div>
<div class="t" style="left:921px;top:563px;letter-spacing:-0.25px">WHL0_H:m</div>
<div class="t" style="left:921px;top:576px;letter-spacing:-0.25px">WHL0_H:m[0]</div>
<div class="t" style="left:921px;top:589px;letter-spacing:-0.25px">WHL0_H:m[1]</div>
<div class="t" style="left:921px;top:602px;letter-spacing:-0.25px">WHL0_H:m[2]</div>
<div class="t" style="left:927px;top:697px;letter-spacing:-0.2px">Hide All</div>
<div class="t" style="left:976px;top:697px;letter-spacing:-0.2px">Show All</div>
<div class="a" style="left:916px;top:710px;width:108px;height:8px;overflow:hidden"><div class="t" style="left:6px;top:3px">Select All</div><div class="t" style="left:60px;top:3px">Deselect</div></div>

<!-- status -->
<svg class="a" style="left:0;top:716px" width="1024" height="52" viewBox="0 716 1024 52" shape-rendering="crispEdges">
<rect x="0" y="718" width="1024" height="20" fill="#e0dfe3"/>
<rect x="0" y="718" width="1024" height="3" fill="#f6f6f8"/>
<rect x="0" y="722" width="752" height="1" fill="#a0a0a8"/><rect x="0" y="722" width="1" height="15" fill="#a0a0a8"/>
<rect x="0" y="736" width="752" height="1" fill="#fafafa"/><rect x="751" y="722" width="1" height="15" fill="#fafafa"/>
<rect x="754" y="722" width="66" height="1" fill="#a0a0a8"/><rect x="754" y="722" width="1" height="15" fill="#a0a0a8"/>
<rect x="754" y="736" width="66" height="1" fill="#fafafa"/><rect x="819" y="722" width="1" height="15" fill="#fafafa"/>
<rect x="822" y="722" width="66" height="1" fill="#a0a0a8"/><rect x="822" y="722" width="1" height="15" fill="#a0a0a8"/>
<rect x="822" y="736" width="66" height="1" fill="#fafafa"/><rect x="887" y="722" width="1" height="15" fill="#fafafa"/>
<rect x="890" y="722" width="66" height="1" fill="#a0a0a8"/><rect x="890" y="722" width="1" height="15" fill="#a0a0a8"/>
<rect x="890" y="736" width="66" height="1" fill="#fafafa"/><rect x="955" y="722" width="1" height="15" fill="#fafafa"/>
<rect x="959" y="722" width="65" height="1" fill="#a0a0a8"/><rect x="959" y="722" width="1" height="15" fill="#a0a0a8"/>
<rect x="959" y="736" width="65" height="1" fill="#fafafa"/><rect x="1023" y="722" width="1" height="15" fill="#fafafa"/>
<rect x="0" y="737" width="1024" height="1" fill="#f6f6f8"/>
<defs>
<linearGradient id="tbg" x1="0" y1="0" x2="0" y2="1">
<stop offset="0" stop-color="#70707c"/><stop offset="0.033" stop-color="#f4f4fa"/><stop offset="0.1" stop-color="#e6e6ee"/><stop offset="0.15" stop-color="#a2a2b2"/>
<stop offset="0.22" stop-color="#9c9eb0"/><stop offset="0.35" stop-color="#a8acc0"/><stop offset="0.5" stop-color="#c4c4ce"/><stop offset="0.65" stop-color="#dcddda"/>
<stop offset="0.82" stop-color="#e6e6ea"/><stop offset="0.9" stop-color="#eaeaf0"/><stop offset="0.94" stop-color="#9a9aa8"/><stop offset="1" stop-color="#7a7a8a"/>
</linearGradient>
<linearGradient id="startg" x1="0" y1="0" x2="0" y2="1">
<stop offset="0" stop-color="#2a6a2a"/><stop offset="0.05" stop-color="#72c872"/><stop offset="0.2" stop-color="#58b858"/><stop offset="0.45" stop-color="#3aa63a"/>
<stop offset="0.8" stop-color="#2c962c"/><stop offset="0.95" stop-color="#2a8a30"/><stop offset="1" stop-color="#1e6a22"/>
</linearGradient>
<linearGradient id="btn1" x1="0" y1="0" x2="0" y2="1"><stop offset="0" stop-color="#fcfcfe"/><stop offset="0.6" stop-color="#eeeef4"/><stop offset="1" stop-color="#d4d4de"/></linearGradient>
<linearGradient id="btn2" x1="0" y1="0" x2="0" y2="1"><stop offset="0" stop-color="#6a7282"/><stop offset="0.5" stop-color="#7c8494"/><stop offset="1" stop-color="#8a92a2"/></linearGradient>
<linearGradient id="trayg" x1="0" y1="0" x2="0" y2="1"><stop offset="0" stop-color="#70707c"/><stop offset="0.04" stop-color="#f8f8fc"/><stop offset="0.2" stop-color="#ececf2"/><stop offset="0.6" stop-color="#e0e0e8"/><stop offset="0.88" stop-color="#cacad6"/><stop offset="0.94" stop-color="#9a9aa8"/><stop offset="1" stop-color="#7a7a8a"/></linearGradient>
<radialGradient id="chev" cx="0.4" cy="0.35" r="0.7"><stop offset="0" stop-color="#e8e8f0"/><stop offset="0.6" stop-color="#a8a8b8"/><stop offset="1" stop-color="#70707e"/></radialGradient>
<linearGradient id="starthl" x1="0" y1="0" x2="1" y2="0"><stop offset="0" stop-color="#b0f0b0" stop-opacity="0"/><stop offset="0.7" stop-color="#b0f0b0" stop-opacity="0.35"/><stop offset="1" stop-color="#b0f0b0" stop-opacity="0"/></linearGradient>
</defs>
<rect x="0" y="738" width="1024" height="30" fill="url(#tbg)"/>
<rect x="913" y="738" width="111" height="30" fill="url(#trayg)"/>
<rect x="913" y="739" width="1" height="29" fill="#8a8a98"/>
<g shape-rendering="auto"><path d="M0 738H92Q99 745 98 753Q97 762 92 768H0Z" fill="url(#startg)"/>
<path d="M92 738Q99 745 98 753Q97 762 92 768" fill="none" stroke="#1e5a1e" stroke-width="1.4"/>
<path d="M0 741H88" stroke="#a0e0a0" stroke-width="1" opacity="0.5"/>
<path d="M76 738H92Q99 745 98 753Q97 762 92 768H76Z" fill="url(#starthl)"/>
<path d="M12 745Q15 743 19 745L18 752Q14 750 11 752Z" fill="#e8662a"/>
<path d="M20 745Q24 747 28 745L27 752Q23 754 19 752Z" fill="#6cc030"/>
<path d="M11 753Q14 751 18 753L17 760Q13 758 10 760Z" fill="#4a8ae8"/>
<path d="M19 753Q23 755 27 753L26 760Q22 762 18 760Z" fill="#f4c428"/>
<text x="35" y="758.5" font-family="Liberation Sans" font-weight="bold" font-style="italic" font-size="16" fill="#1a4a1a" opacity="0.5" transform="translate(1,1)" textLength="37" lengthAdjust="spacingAndGlyphs">start</text>
<text x="35" y="758.5" font-family="Liberation Sans" font-weight="bold" font-style="italic" font-size="16" fill="#f4faee" textLength="37" lengthAdjust="spacingAndGlyphs">start</text>
</g>
<g shape-rendering="auto">
<rect x="107.5" y="741.5" width="157" height="23" rx="2.5" fill="url(#btn1)" stroke="#9a9aaa" stroke-width="1"/>
<rect x="267.5" y="741.5" width="158" height="23" rx="2.5" fill="url(#btn2)" stroke="#5a6070" stroke-width="1"/>
<circle cx="124" cy="753" r="6.5" fill="#2a8ad8"/><path d="M120 752.5H128.5Q128 748 124 748Q120 748 120 752.5ZM121.5 751.5H126.5Q126 749.5 124 749.5Q122 749.5 121.5 751.5Z" fill="#d8f0ff" fill-rule="evenodd"/>
<path d="M118 760Q113 757 122 748Q131 742 132 746" fill="none" stroke="#c8a840" stroke-width="1.6"/>
<rect x="277" y="747" width="16" height="11" rx="4" fill="#10108a"/>
<text x="278" y="757" font-family="Liberation Sans" font-weight="bold" font-size="10" fill="#d0d0ff" letter-spacing="-1">3D</text>
</g>
<g shape-rendering="auto">
<path d="M824 763Q822 759 827 757L833 750" fill="none" stroke="#000" stroke-width="1.4"/><rect x="830" y="746" width="5" height="7" rx="2.5" transform="rotate(40 832 749)" fill="#d0d0d8" stroke="#000" stroke-width="1"/>
<rect x="840" y="746" width="16" height="13" fill="#f0f0f8" stroke="#101060" stroke-width="1"/><rect x="840" y="746" width="16" height="3" fill="#2040a0"/><path d="M843 752h5M843 755h3" stroke="#000" stroke-width="1"/><path d="M846 762L852 754" stroke="#000" stroke-width="1.6"/>
<path d="M863.5 746.5H876.5V758.5H869L866 761.5V758.5H863.5Z" fill="#fafac8" stroke="#000" stroke-width="1.2"/><text x="866.5" y="756.5" font-family="Liberation Sans" font-weight="bold" font-size="10" fill="#000">?</text>
<rect x="889.5" y="747.5" width="5" height="4" fill="none" stroke="#000" stroke-width="1"/><rect x="891.5" y="745.5" width="5" height="4" fill="#e0e0e8" stroke="#000" stroke-width="1"/><path d="M890 755h6l-3 3z" fill="#000"/>
<circle cx="912.5" cy="753" r="8.5" fill="url(#chev)" stroke="#8a8a9a" stroke-width="1"/><path d="M914.5 748.5L910.5 753L914.5 757.5" fill="none" stroke="#fff" stroke-width="2.2"/>
<circle cx="932" cy="752.5" r="7.5" fill="#f4d890" opacity="0.7"/><circle cx="932" cy="752.5" r="5.8" fill="#e8b830" stroke="#000" stroke-width="1.3"/><path d="M926.5 750.5h11M926.5 754.5h11M930 747v11M934 747v11" stroke="#000" stroke-width="1"/>
<rect x="942" y="746" width="15" height="14" fill="#d8e0f0" stroke="#406060" stroke-width="0.8"/><circle cx="946" cy="752" r="3" fill="#e04040"/><circle cx="951" cy="751" r="3" fill="#4060d0"/><path d="M942 758L947 754L952 757L957 752V760H942Z" fill="#608060"/>
</g>
</svg>
<div class="t" style="left:2px;top:725px;letter-spacing:-0.2px">Click to display pop-up menu.</div>
<div class="t" style="left:756px;top:725px;">X: 1.9562</div>
<div class="t" style="left:823px;top:725px;">Y: -1.5095</div>
<div class="t" style="left:891px;top:725px;">Z: 0.0000</div>
<div class="t" style="left:962px;top:725px;">units</div>
<div class="t" style="left:135px;top:748px;color:#000">Midtown Madness 2 C...</div>
<div class="t" style="left:297px;top:748px;color:#fff">school bus - Zanoza ...</div>
<div class="t" style="left:968px;top:748px;">9:07 PM</div>

</div></body></html>
